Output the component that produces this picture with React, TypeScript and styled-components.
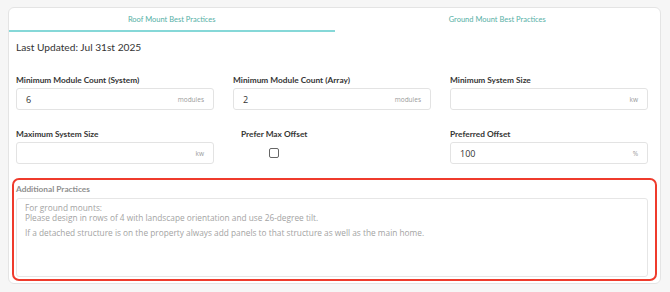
import * as React from "react";
import styled, { createGlobalStyle } from "styled-components";

const teal = "#56b0a6";
const labelFont = `"Lato", "Noto Sans", sans-serif`;
const bodyFont = `"Open Sans", "Noto Sans", sans-serif`;

const GlobalStyle = createGlobalStyle`
  body {
    margin: 0;
    background: #f6f6f6;
    font-family: ${labelFont};
  }
`;

const Card = styled.div`
  margin: 7px 9px 0 8px;
  height: 277px;
  box-sizing: border-box;
  background: #ffffff;
  border: 1px solid #e4e4e4;
  border-radius: 6px;
  overflow: hidden;
`;

const Tabs = styled.div`
  display: grid;
  grid-template-columns: 1fr 1fr;
`;

const Tab = styled.div<{ $active?: boolean }>`
  height: 24px;
  box-sizing: border-box;
  display: flex;
  align-items: center;
  justify-content: center;
  font-size: 7.5px;
  font-weight: 400;
  color: ${teal};
  border-bottom: 2px solid ${(p) => (p.$active ? "#86d8d8" : "transparent")};
`;

const Body = styled.div`
  padding: 8px 12px 0 7px;
`;

const Updated = styled.div`
  font-family: ${labelFont};
  font-size: 10.2px;
  line-height: 14px;
  color: #333333;
  margin-bottom: 21px;
`;

const Grid = styled.div`
  display: grid;
  grid-template-columns: repeat(3, 1fr);
  column-gap: 19px;
  row-gap: 19px;
`;

const Field = styled.div`
  display: flex;
  flex-direction: column;
  gap: 3px;
`;

const Label = styled.div<{ $muted?: boolean }>`
  font-size: 8.3px;
  line-height: 10px;
  font-weight: 700;
  color: ${(p) => (p.$muted ? "#8f8f8f" : "#343434")};
`;

const InputBox = styled.div`
  height: 22px;
  box-sizing: border-box;
  border: 1px solid #e3e3e3;
  border-radius: 3px;
  display: flex;
  align-items: center;
  justify-content: space-between;
  padding: 0 9px 0 9px;
  font-family: ${bodyFont};
`;

const Value = styled.span`
  font-size: 9px;
  color: #333333;
`;

const Suffix = styled.span`
  font-size: 6.5px;
  color: #9a9a9a;
`;

const CheckField = styled.div`
  justify-self: start;
  padding-left: 8px;
  display: flex;
  flex-direction: column;
  align-items: center;
  gap: 9px;
`;

const Checkbox = styled.div`
  width: 10px;
  height: 10px;
  box-sizing: border-box;
  border: 1.5px solid #666666;
  border-radius: 2px;
`;

const Highlight = styled.div`
  margin: 14px -9px 0 -4px;
  height: 103px;
  box-sizing: border-box;
  border: 2px solid #ef3b2c;
  border-radius: 7px;
  padding: 4px 7px 2px 2px;
  display: flex;
  flex-direction: column;
  gap: 4px;
`;

const TextArea = styled.div`
  flex: 1;
  border: 1px solid #e6e6e6;
  border-radius: 3px;
  padding: 4px 8px;
  font-family: ${bodyFont};
  font-size: 8.3px;
  line-height: 9.5px;
  color: #a3a3a3;
`;

const Line = styled.div<{ $gap?: boolean }>`
  margin-top: ${(p) => (p.$gap ? "5.5px" : "0")};
`;

type InputProps = { label: string; value?: string; suffix: string };

const Input: React.FC<InputProps> = ({ label, value = "", suffix }) => (
  <Field>
    <Label>{label}</Label>
    <InputBox>
      <Value>{value}</Value>
      <Suffix>{suffix}</Suffix>
    </InputBox>
  </Field>
);

const App: React.FC = () => (
  <>
    <GlobalStyle />
    <Card>
      <Tabs>
        <Tab $active>Roof Mount Best Practices</Tab>
        <Tab>Ground Mount Best Practices</Tab>
      </Tabs>
      <Body>
        <Updated>Last Updated: Jul 31st 2025</Updated>
        <Grid>
          <Input label="Minimum Module Count (System)" value="6" suffix="modules" />
          <Input label="Minimum Module Count (Array)" value="2" suffix="modules" />
          <Input label="Minimum System Size" suffix="kw" />
          <Input label="Maximum System Size" suffix="kw" />
          <CheckField>
            <Label>Prefer Max Offset</Label>
            <Checkbox />
          </CheckField>
          <Input label="Preferred Offset" value="100" suffix="%" />
        </Grid>
        <Highlight>
          <Label $muted>Additional Practices</Label>
          <TextArea>
            <Line>For ground mounts:</Line>
            <Line>Please design in rows of 4 with landscape orientation and use 26-degree tilt.</Line>
            <Line $gap>
              If a detached structure is on the property always add panels to that structure as well as the main home.
            </Line>
          </TextArea>
        </Highlight>
      </Body>
    </Card>
  </>
);

export default App;
